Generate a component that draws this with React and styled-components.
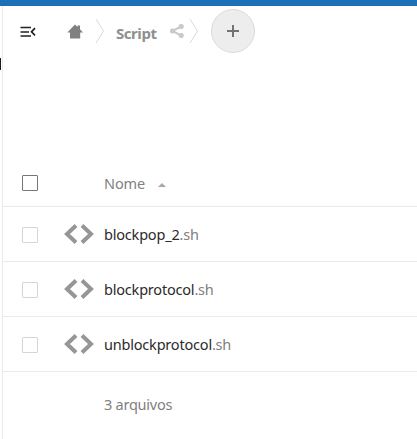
import React from "react";
import styled, { createGlobalStyle } from "styled-components";

const GlobalStyle = createGlobalStyle`
   * {
      box-sizing: border-box;
   }
   body {
      margin: 0;
      background: #fff;
      overflow: hidden;
      font-family: "Noto Sans", "Open Sans", sans-serif;
      font-size: 14.5px;
      color: #2b2b2b;
   }
`;

const Page = styled.div`
   display: flex;
   flex-direction: column;
   height: 100vh;
`;

const TopBar = styled.div`
   height: 6px;
   flex: none;
   background: #1d70b8;
`;

const Body = styled.div`
   display: flex;
   flex: 1;
`;

const Sidebar = styled.div`
   width: 3px;
   flex: none;
   padding-top: 52px;
   border-right: 1px solid #ebebeb;
`;

const SidebarMark = styled.div`
   width: 1px;
   height: 12px;
   background: #1b1930;
`;

const Content = styled.main`
   flex: 1;
   min-width: 0;
`;

const Controls = styled.header`
   display: flex;
   align-items: center;
   height: 50px;
   padding-left: 17px;
   margin-bottom: 96px;

   svg {
      display: block;
      flex: none;
   }
`;

const IconButton = styled.button`
   display: flex;
   padding: 0;
   border: 0;
   background: none;
   margin-left: ${props => props.$gap || 0}px;
`;

const Crumb = styled.span`
   width: 41px;
   margin: 4px 0 0 11px;
   font-size: 15px;
   font-weight: 700;
   line-height: 20px;
   letter-spacing: -0.45px;
   white-space: nowrap;
   color: #8f8f8f;
`;

const AddButton = styled.button`
   display: flex;
   align-items: center;
   justify-content: center;
   width: 44px;
   height: 44px;
   margin-left: 12px;
   padding: 0;
   border: 1px solid #dbdbdb;
   border-radius: 50%;
   background: #ededed;
`;

const Row = styled.div`
   display: grid;
   grid-template-columns: 41px 41px 1fr;
   align-items: center;
   height: 55px;
   padding-left: 19px;
   border-bottom: 1px solid #ebebeb;
`;

const Checkbox = styled.span`
   width: 16px;
   height: 16px;
   margin-top: ${props => (props.$strong ? 8 : 2)}px;
   border: 1px solid ${props => (props.$strong ? "#767676" : "#d6d6d6")};
   border-radius: 1px;
`;

const HeaderCell = styled.div`
   display: flex;
   align-items: center;
   grid-column: 3;
   padding-top: 7px;
   line-height: 20px;
   letter-spacing: -0.1px;
   color: #808080;
`;

const SortArrow = styled.span`
   margin: 4px 0 0 13px;
   border: 4px solid transparent;
   border-top: 0;
   border-bottom-color: #a8a8a8;
`;

const FileName = styled.div`
   line-height: 20px;
   padding-bottom: 1px;
   letter-spacing: -0.2px;
   white-space: nowrap;

   span {
      color: #808080;
   }
`;

const Summary = styled.div`
   padding: 22px 0 0 101px;
   line-height: 20px;
   letter-spacing: -0.25px;
   color: #808080;
`;

const files = [
   { name: "blockpop_2", ext: ".sh" },
   { name: "blockprotocol", ext: ".sh" },
   { name: "unblockprotocol", ext: ".sh" },
];

function Separator() {
   return (
      <svg width="10" height="26" fill="none" stroke="#dadada">
         <path d="M1 1L8.5 13L1 25" />
      </svg>
   );
}

function CodeIcon() {
   return (
      <svg width="32" height="20" fill="none" stroke="#969696" strokeWidth="4">
         <path d="M13 1.5L4 10L13 18.5M19 1.5L28 10L19 18.5" />
      </svg>
   );
}

export default function App() {
   return (
      <Page>
         <GlobalStyle />
         <TopBar />
         <Body>
            <Sidebar><SidebarMark /></Sidebar>
            <Content>
               <Controls>
                  <IconButton>
                     <svg width="16" height="12" fill="none" stroke="#222" strokeWidth="1.7">
                        <path d="M0.5 2.5H11M0.5 7H9M0.5 11H11M15 3.2L11.5 6.8L15 10.4" />
                     </svg>
                  </IconButton>
                  <IconButton $gap={31}>
                     <svg width="16" height="15" fill="#808080">
                        <path d="M8 0.5L10.5 3V1.5H13V5.3L16 8.5H13.2V14.5H3V8.5H0.3Z" />
                     </svg>
                  </IconButton>
                  <IconButton $gap={12}><Separator /></IconButton>
                  <Crumb>Script</Crumb>
                  <IconButton $gap={12}>
                     <svg width="16" height="16" fill="#cacaca" stroke="#cacaca">
                        <path d="M12 3.5L3.5 8L12 12.5" fill="none" strokeWidth="2" />
                        <circle cx="12.2" cy="3.5" r="2.2" />
                        <circle cx="3.5" cy="8" r="2.2" />
                        <circle cx="12.2" cy="12.5" r="2.2" />
                     </svg>
                  </IconButton>
                  <IconButton $gap={4}><Separator /></IconButton>
                  <AddButton>
                     <svg width="12" height="12" stroke="#737373" strokeWidth="2">
                        <path d="M6 0V12M0 6H12" />
                     </svg>
                  </AddButton>
               </Controls>
               <Row>
                  <Checkbox $strong />
                  <HeaderCell>Nome<SortArrow /></HeaderCell>
               </Row>
               {files.map(file => (
                  <Row key={file.name}>
                     <Checkbox />
                     <CodeIcon />
                     <FileName>
                        {file.name}<span>{file.ext}</span>
                     </FileName>
                  </Row>
               ))}
               <Summary>3 arquivos</Summary>
            </Content>
         </Body>
      </Page>
   );
}
